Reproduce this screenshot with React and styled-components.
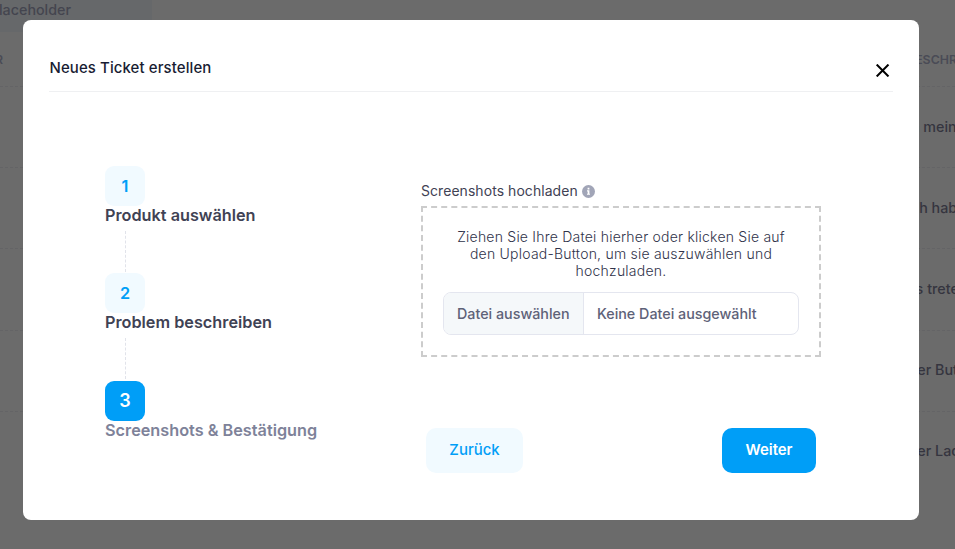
import React from "react";
import styled, { createGlobalStyle, css } from "styled-components";

const GlobalStyle = createGlobalStyle`
  * { box-sizing: border-box; }
  body { margin: 0; background: #6b6b6b; font-family: Inter, "Liberation Sans", sans-serif; overflow: hidden; }
`;

const Page = styled.div`
  position: relative;
  width: 955px;
  height: 549px;
  overflow: hidden;
  background: #6b6b6b;
`;

const Search = styled.div`
  width: 152px;
  height: 32px;
  background: #66686a;
  border-radius: 0 0 6px 0;
  color: #44454f;
  font-size: 14.3px;
  font-weight: 500;
  line-height: 20px;
  padding-right: 81px;
  display: flex;
  justify-content: flex-end;
  white-space: nowrap;
`;

const TableRow = styled.div`
  display: flex;
  justify-content: space-between;
  align-items: center;
  height: ${(p) => (p.$head ? 55 : p.$last ? 80 : 81.2)}px;
  padding-bottom: ${(p) => (p.$head ? 0 : 2)}px;
  border-bottom: ${(p) => (p.$last ? "none" : "1px dashed #646466")};
  color: ${(p) => (p.$head ? "#4a4b56" : "#35353f")};
  font-size: ${(p) => (p.$head ? 12.35 : 14.3)}px;
  font-weight: ${(p) => (p.$head ? 600 : 500)};
`;

const LeadCell = styled.span`
  width: 3px;
  display: flex;
  justify-content: flex-end;
`;

const TextCell = styled.span`
  width: 48px;
  white-space: nowrap;
`;

const Modal = styled.section`
  position: absolute;
  top: 20px;
  left: 23px;
  width: 896px;
  height: 500px;
  background: #fff;
  border-radius: 8px;
  padding: 0 26px;
`;

const Header = styled.header`
  display: flex;
  justify-content: space-between;
  height: 72px;
  border-bottom: 1px solid #eff0f2;
`;

const Title = styled.h1`
  margin: 0;
  padding: 38px 0 0 0.5px;
  font-size: 14.95px;
  font-weight: 500;
  letter-spacing: 0.11px;
  line-height: 20px;
  color: #181c32;
`;

const CloseButton = styled.button`
  align-self: flex-start;
  display: flex;
  border: 0;
  padding: 0;
  margin: 44px 3px 0 0;
  background: none;
`;

const Content = styled.div`
  display: flex;
  padding: 74px 0 0 56px;
`;

const Stepper = styled.nav`
  width: 316px;
`;

const Step = styled.div`
  height: 107.4px;
`;

const StepNumber = styled.div`
  width: 40px;
  height: 40px;
  border-radius: 9px;
  display: flex;
  align-items: center;
  justify-content: center;
  font-weight: 600;
  font-size: ${(p) => (p.$active ? 18 : 16.25)}px;
  color: ${(p) => (p.$active ? "#fff" : "#009ef7")};
  background: ${(p) => (p.$active ? "#009ef7" : "#f1faff")};
`;

const StepTitle = styled.div`
  height: 20px;
  font-size: 16.25px;
  font-weight: 600;
  line-height: 18px;
  white-space: nowrap;
  color: ${(p) => (p.$active ? "#7e8299" : "#3f4254")};
`;

const StepLine = styled.div`
  width: 0;
  height: 41px;
  margin: 5px 0 0 20px;
  border-left: 1px dashed #e1e3ea;
`;

const Form = styled.div`
  width: 400px;
`;

const Label = styled.div`
  display: flex;
  align-items: center;
  gap: 4px;
  padding-top: 15px;
  line-height: 20px;
  font-size: 13.98px;
  letter-spacing: 0.07px;
  color: #3f4254;
`;

const DropZone = styled.div`
  margin-top: 5px;
  height: 151px;
  border: 2px dashed #ccc;
  padding: 20px 20px 0;
`;

const Hint = styled.p`
  margin: 0;
  padding: 0 8px;
  text-align: center;
  font-size: 14px;
  font-weight: 300;
  letter-spacing: 0.22px;
  line-height: 17px;
  color: #30334a;
`;

const FileInput = styled.div`
  display: flex;
  height: 43px;
  margin-top: 13px;
  border: 1px solid #e4e6ef;
  border-radius: 8px;
  overflow: hidden;
  color: #5e6278;
  font-size: 14.3px;
  font-weight: 500;
  line-height: 42px;
  white-space: nowrap;
`;

const filePart = css`
  padding-left: 13px;
`;

const FileButton = styled.span`
  ${filePart}
  width: 140px;
  background: #f5f8fa;
  border-right: 1px solid #e4e6ef;
`;

const FileName = styled.span`
  ${filePart}
`;

const Actions = styled.div`
  display: flex;
  justify-content: space-between;
  padding: 71px 5px 0;
`;

const Button = styled.button`
  width: ${(p) => (p.$primary ? 94 : 97)}px;
  height: 45px;
  padding: 0 0 2px;
  border: 0;
  border-radius: 10px;
  font-family: inherit;
  font-size: 14.95px;
  font-weight: ${(p) => (p.$primary ? 600 : 500)};
  color: ${(p) => (p.$primary ? "#fff" : "#009ef7")};
  background: ${(p) => (p.$primary ? "#009ef7" : "#f1faff")};
`;

const rows = ["In meinem", "Ich habe", "Es treten", "Der Button", "Der Ladevorgang"];

const steps = ["Produkt auswählen", "Problem beschreiben", "Screenshots & Bestätigung"];

const CloseIcon = () => (
  <svg width="15" height="13" viewBox="0 0 15 13" fill="none" stroke="#000" strokeWidth="2.1">
    <path d="M1.7 0.6L13.5 12.4M13.5 0.6L1.7 12.4" />
  </svg>
);

const InfoIcon = () => (
  <svg width="13" height="13" viewBox="0 0 13 13">
    <circle cx="6.5" cy="6.5" r="6.5" fill="#a1a5b7" />
    <path d="M5.6 2.7h1.8v1.7H5.6zM5 5.3h2.4v3.4H8v1.1H5V8.7h.7V6.4H5z" fill="#fff" />
  </svg>
);

export default function App() {
  return (
    <Page>
      <GlobalStyle />
      <Search>Placeholder</Search>
      <TableRow $head>
        <LeadCell>NR</LeadCell>
        <TextCell>BESCHREIBUNG</TextCell>
      </TableRow>
      {rows.map((text, i) => (
        <TableRow key={text} $last={i === rows.length - 1}>
          <LeadCell />
          <TextCell>{text}</TextCell>
        </TableRow>
      ))}
      <Modal>
        <Header>
          <Title>Neues Ticket erstellen</Title>
          <CloseButton aria-label="Schließen">
            <CloseIcon />
          </CloseButton>
        </Header>
        <Content>
          <Stepper>
            {steps.map((title, i) => {
              const active = i === steps.length - 1;
              return (
                <Step key={title}>
                  <StepNumber $active={active}>{i + 1}</StepNumber>
                  <StepTitle $active={active}>{title}</StepTitle>
                  {!active && <StepLine />}
                </Step>
              );
            })}
          </Stepper>
          <Form>
            <Label>
              Screenshots hochladen
              <InfoIcon />
            </Label>
            <DropZone>
              <Hint>
                Ziehen Sie Ihre Datei hierher oder klicken Sie auf den Upload-Button, um sie
                auszuwählen und hochzuladen.
              </Hint>
              <FileInput>
                <FileButton>Datei auswählen</FileButton>
                <FileName>Keine Datei ausgewählt</FileName>
              </FileInput>
            </DropZone>
            <Actions>
              <Button>Zurück</Button>
              <Button $primary>Weiter</Button>
            </Actions>
          </Form>
        </Content>
      </Modal>
    </Page>
  );
}
